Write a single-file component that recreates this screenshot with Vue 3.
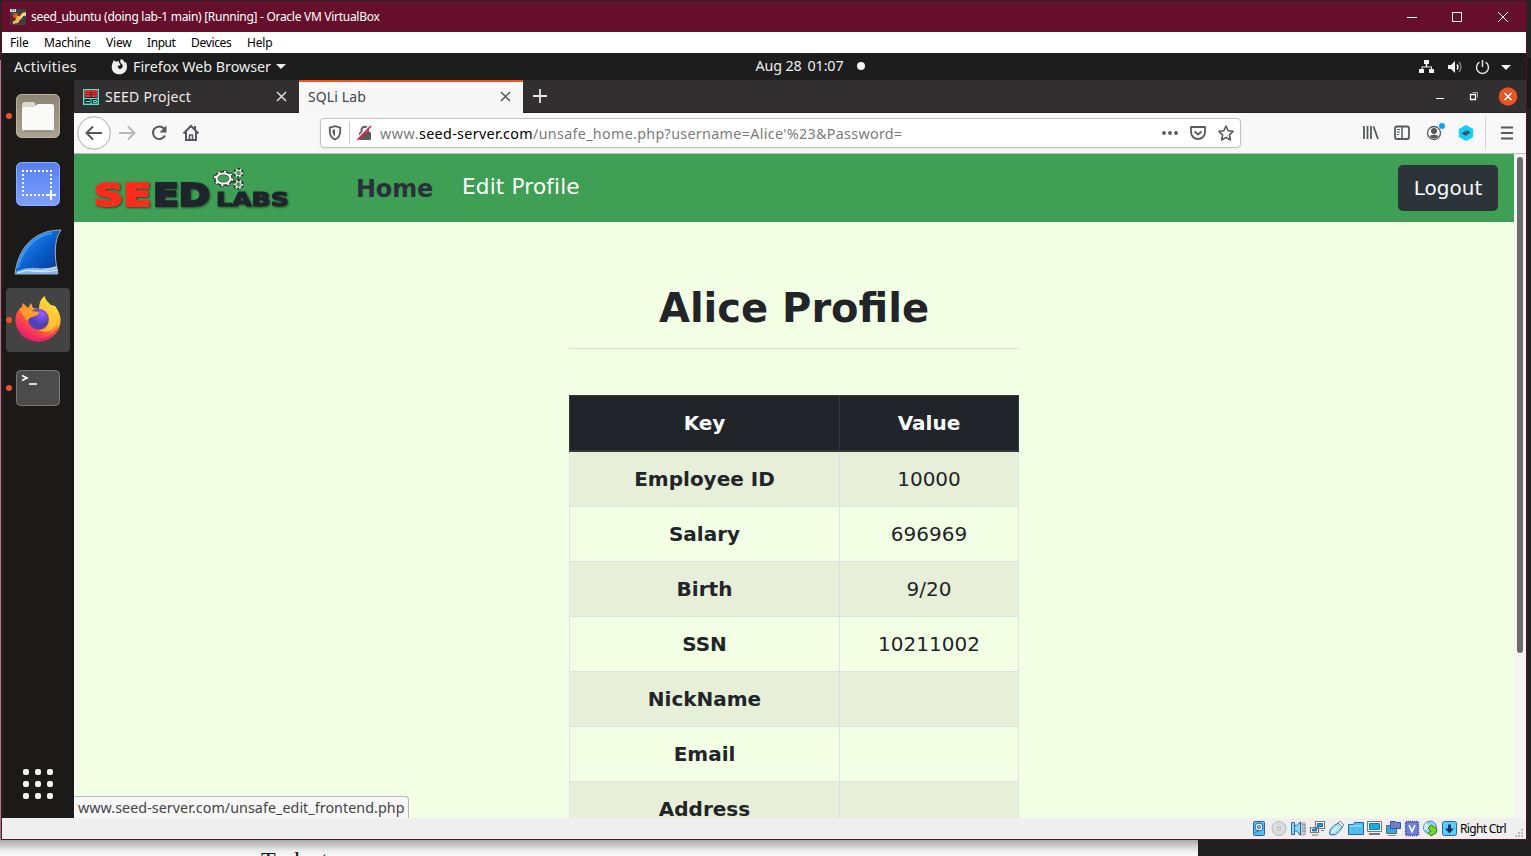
<script setup>
// Tracks each label out or in so it fills the given advance width.
const vFit = {
  mounted(el, { value }) {
    const width = el.getBoundingClientRect().width
    el.style.letterSpacing = `${(value - width) / el.textContent.length}px`
  }
}
const menus = [['File', 18.5], ['Machine', 46.5], ['View', 25.5], ['Input', 28.5], ['Devices', 40.5], ['Help', 25.5]]
const rows = [
  ['Employee ID', '10000'], ['Salary', '696969'], ['Birth', '9/20'], ['SSN', '10211002'],
  ['NickName', ''], ['Email', ''], ['Address', '']
]
</script>

<template>
  <div class="desktop">
    <div class="behind"><span class="paper"><span>Tasks t</span></span></div>
    <div class="vm">
      <header class="titlebar">
        <svg class="vmicon" width="16" height="16" viewBox="0 0 16 16">
          <rect width="16" height="16" fill="#3b414b" /><path d="M0 0h6v3H0z" fill="#ddd" /><path d="M1 1h4" stroke="#777" />
          <path d="M1 7l4 1-1 5-4-1z" fill="#6a2022" /><circle cx="5.5" cy="6.5" r="2.6" fill="#e64b26" />
          <path d="M7 7h3l2-3 4-1v4h-3l-3 4-2 3-5 1v-3h2z" fill="#f1b94c" /><path d="M8 8h3l2-3 3-1v1l-2 1-3 4z" fill="#fbe19a" />
        </svg>
        <span v-fit="348.5">seed_ubuntu (doing lab-1 main) [Running] - Oracle VM VirtualBox</span>
        <svg class="wincontrols" width="105" height="12" viewBox="0 0 105 12" fill="none" stroke="#fff">
          <path d="M0 6.5h10M45.5 1.5h9v9h-9zM91 1l10 10M101 1L91 11" />
        </svg>
      </header>
      <nav class="menubar"><span v-for="m in menus" :key="m[0]" v-fit="m[1]">{{ m[0] }}</span></nav>

      <div class="topbar">
        <div class="tb-left">
          <span v-fit="63">Activities</span>
          <svg class="fxsym" width="17" height="16" viewBox="0 0 17 16">
            <path fill="#f0f0f0" d="M2 3l1-2 1.3 1.4 2 .2L8 2v2l1.500 1-.6 1.400-2 .4C6.300 9.800 9 10.800 10.800 9.300c1.600-1.500 1-3.800-.8-5L9 2.500 10 0c2 .7 3 1.800 3.500 3.400L15 3c1.700 4 1.200 7.600-1 10-3 3-8 3-11 .4C.2 11 .2 6.500 2 3z" />
          </svg>
          <span v-fit="138">Firefox Web Browser</span>
          <i class="caret"></i>
        </div>
        <div class="clock"><span v-fit="46">Aug 28</span><span v-fit="36">01:07</span><i></i></div>
        <div class="tray">
          <svg width="92" height="16" viewBox="0 0 92 16">
            <path d="M5 1h5v4H8.300v2.500H13V10h2v4h-5v-4h2V8.500H3.500V10H5v4H0v-4h2.500V7.500h4.200V5H5z" fill="#f2f2f2" />
            <path d="M29 6h3l4-4v12l-4-4h-3z" fill="#f2f2f2" />
            <path d="M38 5.500q2 2.500 0 5" fill="none" stroke="#f2f2f2" stroke-width="1.500" /><path d="M40 3q4 5 0 10" fill="none" stroke="#888" stroke-width="1.300" />
            <path d="M60.500 3.200a6 6 0 1 0 6 0M63.500 1v7" fill="none" stroke="#e2e2e2" stroke-width="1.500" />
            <path d="M82 6h10l-5 5z" fill="#f2f2f2" />
          </svg>
        </div>
      </div>

      <div class="guest">
        <aside class="dock">
          <div class="slot run">
            <svg width="46" height="46" viewBox="0 0 46 46">
              <defs><linearGradient id="fl" x2="0" y2="1"><stop stop-color="#8d8674" /><stop offset="1" stop-color="#aaa28e" /></linearGradient></defs>
              <rect x="1.500" y="1.500" width="43" height="43" rx="5" fill="url(#fl)" stroke="#bab3a3" />
              <path d="M7 12q0-3 3-3h8q2 0 2.500 3h16q2 0 2 2v4H7z" fill="#ddd8cc" />
              <path d="M7 36V16q0-2 2-2h10l4-3h14q2 0 2 2v22q0 2.500-2 2.500H9q-2 0-2-1.500z" fill="#fafaf8" />
              <path d="M9 38h28" stroke="#7b7464" />
            </svg>
          </div>
          <div class="slot">
            <svg width="46" height="46" viewBox="0 0 46 46">
              <defs><linearGradient id="sb" x2="0" y2="1"><stop stop-color="#5680ef" /><stop offset="1" stop-color="#7ea1fc" /></linearGradient></defs>
              <rect x="1.500" y="1.500" width="43" height="43" rx="5" fill="url(#sb)" stroke="#91adfa" />
              <path d="M7 10h30M8 13v22M7 34h24M36 13v17" stroke="#fff" stroke-width="2" stroke-dasharray="2 2" fill="none" /><path d="M31 34h10M36 29v10" stroke="#fff" stroke-width="2" />
            </svg>
          </div>
          <div class="slot">
            <svg width="48" height="46" viewBox="0 0 48 46">
              <defs><linearGradient id="fin" x1="0" y1="0" x2="1" y2="1"><stop stop-color="#42a5ff" /><stop offset=".48" stop-color="#0c62d2" /><stop offset="1" stop-color="#01328d" /></linearGradient></defs>
              <path d="M1 45C4 20 19 1 47 1C40 10 40 28 44 45Z" fill="url(#fin)" stroke="#a2abb4" />
              <path d="M4 39C8 20 20 7 38 4" fill="none" stroke="#52adfa" stroke-width="2" opacity=".65" />
              <path d="M3 42q10-4 20-3t20-2l1 8H2z" fill="#86b3e6" /><path d="M3 44q10-4 18-2t23-1M12 41q14 3 31-3" fill="none" stroke="#e3effc" />
            </svg>
          </div>
          <div class="slot run active">
            <svg width="46" height="47" viewBox="0 0 46 47">
              <defs>
                <linearGradient id="fx" x1=".85" y1=".05" x2=".2" y2=".95"><stop stop-color="#fff44f" /><stop offset=".35" stop-color="#ffb52d" /><stop offset=".65" stop-color="#ff553c" /><stop offset="1" stop-color="#e5147d" /></linearGradient>
                <radialGradient id="fg" cx=".65" cy=".25"><stop stop-color="#9b5cff" /><stop offset="1" stop-color="#5140b5" /></radialGradient>
              </defs>
              <path d="M6 13l2-5 5 5 3-5 2 5 6 1C24 8 26 3 30 1c0 4 3 6 6 9l4 1c4 5 6 11 5.500 15C45 38 35 46.500 23 46.500S.5 37 .5 25c0-5 1.500-9 5.500-12z" fill="url(#fx)" />
              <path d="M2 32c4 10 15 13 25 11 8-1 14-7 17-12-3 10-11 15.500-21 15.500C13 46.500 4 41 2 32z" fill="#e51f70" opacity=".65" />
              <circle cx="23.500" cy="24" r="10.500" fill="url(#fg)" />
              <path d="M4 14c5-3 9-2 13 2l7 1c0 3-3 4-7 5-3 1-4 2-4 4-5-4-5-8-9-12z" fill="#ff9b27" />
              <path d="M24 14c6 0 10 4 10 11s-5 10-10 10c8 5 18-1 18-11 0-5-2-9-5-12l-6-7c-3 2-5 5-7 9z" fill="#ffcf38" opacity=".75" />
            </svg>
          </div>
          <div class="slot run">
            <svg width="46" height="38" viewBox="0 0 46 38">
              <rect x="1.500" y="1.500" width="43" height="35" rx="4" fill="#4b4b4b" stroke="#777" /><path d="M7 6.500l5 2.500-5 2.500" fill="none" stroke="#fff" stroke-width="1.600" /><path d="M14 15h8" stroke="#fff" stroke-width="1.600" />
            </svg>
          </div>
          <div class="apps"><i v-for="n in 9" :key="n"></i></div>
        </aside>

        <section class="browser">
          <div class="tabs">
            <div class="tab idle">
              <svg width="16" height="16" viewBox="0 0 16 16"><rect x=".7" y=".7" width="14.600" height="14.600" fill="#252a33" stroke="#51e4c8" stroke-width="1.400" /><path d="M1.500 2h6M1.500 4.500h6M1.500 7h6M8.500 2h6M8.500 4.500h6M8.500 7h6" stroke="#ee2d2b" stroke-width="1.900" /><path d="M1 9.500h14M8 9v6M3 12.500h4M10.500 11.500h3v2h-3z" stroke="#51e4c8" fill="none" /></svg>
              <span v-fit="86">SEED Project</span>
              <svg class="x" width="11" height="11" viewBox="0 0 11 11"><path d="M1 1l9 9M10 1L1 10" stroke="#dedede" stroke-width="1.500" /></svg>
            </div>
            <div class="tab current">
              <span v-fit="58">SQLi Lab</span>
              <svg class="x" width="11" height="11" viewBox="0 0 11 11"><path d="M1 1l9 9M10 1L1 10" stroke="#555" stroke-width="1.500" /></svg>
            </div>
            <svg class="plus" width="14" height="14" viewBox="0 0 14 14"><path d="M7 0v14M0 7h14" stroke="#e4e4e4" stroke-width="1.800" /></svg>
            <svg class="fxcontrols" width="82" height="20" viewBox="0 0 82 20" fill="none">
              <path d="M0 12.500h8" stroke="#fff" /><path d="M34.500 8.500h5v5h-5z" stroke="#fff" stroke-width="1.300" /><path d="M36.500 6.500h5v5" stroke="#aaa" />
              <circle cx="72" cy="10.500" r="9.300" fill="#e95420" /><path d="M68.500 7l7 7M75.500 7l-7 7" stroke="#fff" stroke-width="1.600" />
            </svg>
          </div>

          <div class="toolbar">
            <svg class="navbtns" width="126" height="34" viewBox="0 0 126 34" fill="none" stroke="#55585c" stroke-width="2">
              <circle cx="17" cy="17" r="16.300" fill="#fff" stroke="#aaa" stroke-width="1" />
              <path d="M25 17H10M16 10.500L9.500 17l6.500 6.500" />
              <path d="M42 17h15M51 10.500l6.500 6.500-6.500 6.500" stroke="#b7b8b9" />
              <path d="M87 12.500a6.300 6.300 0 1 0 1 7" /><path d="M89.500 9.500v7h-7z" fill="#55585c" stroke="none" />
              <path d="M106.500 17.500l7.500-7.500 7.500 7.500M109 16v8h10v-8M118 10v4" /><path d="M112.500 24v-5h3v5" stroke-width="1.500" />
            </svg>
            <div class="url">
              <svg width="14" height="16" viewBox="0 0 14 16"><path d="M7 1.200l5.200 1.500V6.500c0 4-2 6.500-5.200 8-3.200-1.500-5.200-4-5.200-8V2.700z" fill="none" stroke="#5b5b5b" stroke-width="1.800" /><path d="M7 4.200v7.300C5 10 4.500 8.500 4.500 5z" fill="#5b5b5b" /></svg>
              <i class="sep"></i>
              <svg class="lock" width="16" height="16" viewBox="0 0 16 16"><path d="M4.500 8V5a3.200 3.200 0 0 1 6.500 0v3" fill="none" stroke="#5b5b5b" stroke-width="2" /><rect x="2" y="7" width="12" height="8" rx="1.200" fill="#5b5b5b" /><path d="M0 13.500L13 0" stroke="#fff" stroke-width="1.500" /><path d="M.5 15L14 1" stroke="#ff1749" stroke-width="1.800" /></svg>
              <span class="addr"><span v-fit="39">www.</span><b v-fit="114">seed-server.com</b><span v-fit="369.500">/unsafe_home.php?username=Alice'%23&amp;Password=</span></span>
              <svg class="urlicons" width="72" height="18" viewBox="0 0 72 18" fill="none" stroke="#5b5b5b" stroke-width="1.800">
                <g fill="#5b5b5b" stroke="none"><circle cx="2" cy="9" r="1.900" /><circle cx="8" cy="9" r="1.900" /><circle cx="14" cy="9" r="1.900" /></g>
                <path d="M29 3h14v5c0 4-3 7-7 7s-7-3-7-7zM32.500 7.500l3.500 3 3.500-3" stroke-linejoin="round" />
                <path d="M64 2l2.100 4.700 5 .6-3.700 3.500 1 5.200-4.400-2.600-4.400 2.600 1-5.200-3.700-3.500 5-.6z" stroke-width="1.600" stroke-linejoin="round" />
              </svg>
            </div>
            <svg class="extras" width="152" height="34" viewBox="0 0 152 34" fill="none" stroke="#55585c" stroke-width="2">
              <path d="M2 10v13M5.500 10v13M9 10v13M11.500 10.500l4.500 12.500" stroke-width="1.800" />
              <rect x="33" y="10.500" width="14" height="12.500" rx="2" stroke-width="1.800" /><path d="M40 10v13" stroke-width="1.500" /><path d="M35 13.500h3M35 16h3M35 18.500h2" stroke-width="1" />
              <circle cx="72" cy="17" r="6.500" stroke-width="1.300" /><circle cx="72" cy="15" r="3" fill="#55585c" stroke="none" /><path d="M67.500 20q4.500-2.500 9 0-1.500 2.500-4.500 2.500T67.500 20z" fill="#55585c" stroke="none" /><circle cx="80" cy="10" r="3" fill="#0aa5f7" stroke="none" />
              <path d="M104 9l7.200 4v8l-7.200 4-7.200-4v-8z" fill="#14cff9" stroke="none" /><path d="M99.500 17.500l4-3v2h1v3.500zM108.500 16.500l-4-2.500v5z" fill="#3b4b55" stroke="none" />
              <path d="M123.500 0v34" stroke="#d5d5d6" stroke-width="1" /><path d="M139 11.500h12M139 17h12M139 22.500h12" stroke-width="1.800" />
            </svg>
          </div>

          <div class="viewport">
            <main class="page">
              <div class="sitebar">
                <svg class="logo" width="202" height="48" viewBox="0 0 202 48">
                  <g class="wordmark" stroke-linejoin="miter">
                    <text x="1" y="39.500" font-size="32" fill="#ff2b1d" stroke="#ff2b1d" stroke-width="2.200" textLength="57" lengthAdjust="spacingAndGlyphs">SE</text>
                    <text x="60" y="39.500" font-size="32" fill="#20242c" stroke="#20242c" stroke-width="2.200" textLength="57" lengthAdjust="spacingAndGlyphs">ED</text>
                    <text x="123" y="39.500" font-size="19.500" fill="#20242c" stroke="#20242c" stroke-width="1" textLength="73" lengthAdjust="spacingAndGlyphs">LABS</text>
                  </g>
                  <g fill="none" stroke="#26332b">
                    <ellipse cx="130.500" cy="12.500" rx="7.500" ry="5.500" stroke-width="4" /><ellipse cx="130.500" cy="12.500" rx="9" ry="6.800" stroke-width="3.500" stroke-dasharray="3.200 3" />
                    <g stroke-width="3.200"><circle cx="145.500" cy="7" r="3.700" stroke-dasharray="2.700 1.200" /><circle cx="145.500" cy="18.500" r="3.700" stroke-dasharray="2.700 1.200" /></g>
                  </g>
                  <g fill="none" stroke="#f6f6f6">
                    <ellipse cx="130.500" cy="12.500" rx="7" ry="5" stroke-width="2.200" /><ellipse cx="130.500" cy="12.500" rx="8.800" ry="6.800" stroke-width="2" stroke-dasharray="2.200 4" />
                    <g stroke-width="1.100"><circle cx="145.500" cy="7" r="2.700" /><circle cx="145.500" cy="18.500" r="2.700" /><g stroke-width="1.400" stroke-dasharray="1.400 2.600"><circle cx="145.500" cy="7" r="4" /><circle cx="145.500" cy="18.500" r="4" /></g></g>
                  </g>
                </svg>
                <b class="home"><span v-fit="77">Home</span></b>
                <span class="edit"><span v-fit="117.800">Edit Profile</span></span>
                <button class="logout">Logout</button>
              </div>
              <div class="profile">
                <h1>Alice Profile</h1>
                <div class="table">
                  <div class="row head"><b>Key</b><b>Value</b></div>
                  <div v-for="r in rows" :key="r[0]" class="row"><b>{{ r[0] }}</b><span>{{ r[1] }}</span></div>
                </div>
              </div>
            </main>
            <div class="scroll"><i></i></div>
            <div class="tip"><span v-fit="326.500">www.seed-server.com/unsafe_edit_frontend.php</span></div>
          </div>
        </section>
      </div>

      <footer class="status">
        <svg width="206" height="18" viewBox="0 0 206 18" fill="#a9e4ff" stroke="#2866b4">
          <rect x="1.500" y="2.500" width="11" height="14" rx="1" fill="#54bdf6" /><circle cx="7" cy="8" r="4" fill="#eafaff" /><circle cx="7" cy="8" r="1.500" /><path d="M3 14l4-3" fill="none" />
          <circle cx="27" cy="9.500" r="7" fill="#ddd" stroke="#b6b6b6" /><circle cx="27" cy="9.500" r="1.500" fill="#eee" stroke="#aaa" />
          <path d="M47 4h6v12h-6z" fill="#ccc" stroke="#aaa" /><path d="M50 6h4M50 9h4M50 12h4" stroke="#888" /><path d="M39.500 3.500h3v12h-3zM42.500 6.500h2l4-3.500v13l-4-4h-2z" fill="#8bd8fa" />
          <path d="M63.500 2.500h9v7h-9zM58.500 8.500h8v5h-8z" stroke="#777" fill="#fff" stroke-width="1.200" /><path d="M65.500 4.500h5v3h-5zM60.500 10h4v2h-4z" fill="#1c9ce0" stroke="#1769ad" /><path d="M60 16h6M69 11.500h3" stroke="#777" />
          <path d="M77.500 14q0-4 4-7l5-3 4 4-3 4q-4 5-8 4-2 0-2-2z" /><path d="M86 4l2-2 4 4-2 2z" fill="#eee" stroke="#888" /><path d="M80 14l6-6" stroke="#e4f7ff" stroke-width="1.500" />
          <path d="M96.500 5.500h5l1-2h9v12h-15z" fill="#52bced" /><path d="M98 7h12" stroke="#b6edff" />
          <path d="M115.500 2.500h14v10h-14z" fill="#f7f7f7" stroke="#777" /><path d="M117.500 4.500h10v6h-10z" fill="#1aaee9" stroke="#137eb8" /><path d="M117 15h11" stroke="#777" stroke-width="2" />
          <path d="M134.500 6.500h10v8h-10z" fill="#2ba8ea" stroke="#666" /><path d="M136 16.500h8" stroke="#888" /><path d="M138.500 2.500h5l1 1h4v6h-10z" fill="#6d7ed0" stroke="#424ea7" />
          <rect x="154" y="3" width="12" height="13" fill="#7284df" stroke="#464fae" stroke-width="2.500" stroke-dasharray="1 1" /><rect x="154" y="3" width="12" height="13" fill="#6f80dc" stroke="#4c58b4" /><path d="M157 6l3 6.500 3-6.500" fill="none" stroke="#fff" stroke-width="1.700" />
          <circle cx="178" cy="8.500" r="6.500" fill="#8fd3f2" stroke="#5a87a8" /><path d="M173 4l4 2-1 4-4 1" fill="#d7f3fb" stroke="none" /><path d="M179 6l6 4-1 4-5 3-3-3 3-2-3-3z" fill="#75d62b" stroke="#397b18" />
          <rect x="190.500" y="2.500" width="14" height="14" rx="2" fill="#59d0fa" /><path d="M196 5.500h3v4h3l-4.500 5-4.500-5h3z" fill="#153564" stroke="none" />
        </svg>
        <span v-fit="46">Right Ctrl</span>
        <svg class="grip" width="9" height="9" viewBox="0 0 9 9" fill="#bbb"><path d="M6 0h2v2H6zM3 3h2v2H3zM6 3h2v2H6zM0 6h2v2H0zM3 6h2v2H3zM6 6h2v2H6z" /></svg>
      </footer>
    </div>
  </div>
</template>

<style>
html, body { margin: 0; overflow: hidden; }
</style>
<style scoped>
* { box-sizing: border-box; }
span, b { white-space: pre; }
svg { flex: none; display: block; }
.desktop { width: 1531px; height: 856px; background: linear-gradient(#242424 0 58px, #181818 58px 108px, #202020 108px); position: relative; overflow: hidden; font-family: "Noto Sans", sans-serif; padding: 1px; }
.behind { position: absolute; inset: 0; background: linear-gradient(90deg, #8d8289 1px, transparent 1px) 0 60px no-repeat; }
.paper { position: absolute; left: 0; top: 840px; width: 1198px; height: 16px; overflow: hidden; background: linear-gradient(#aaa, #eee 11px, #fafafa); font: 24px/24px "Liberation Serif", serif; padding: 8px 0 0 261px; color: #111; }
.paper span { display: block; }
.vm { position: relative; width: 1526px; height: 839px; border: 1px solid #5d0e2b; border-top: 0; display: flex; flex-direction: column; background: #efefef; }
.titlebar { height: 31px; background: #660f2c; color: #fff; display: flex; align-items: center; padding-left: 8px; font-size: 12px; flex: none; }
.vmicon { margin-right: 5px; }
.wincontrols { margin-left: auto; margin-right: 14px; }
.menubar { height: 21px; flex: none; background: #fff; display: flex; align-items: center; font-size: 12px; color: #000; padding-left: 8px; gap: 15.500px; }
.topbar { height: 27px; flex: none; background: #1d1d1d; color: #eee; display: grid; grid-template-columns: 1fr auto 1fr; align-items: center; font-size: 14.300px; }
.tb-left { display: flex; align-items: center; padding-left: 12px; }
.fxsym { margin: 0 5px 0 34px; }
.caret { border: 5px solid transparent; border-top-color: #eee; border-bottom: 0; margin-left: 5px; }
.clock { display: flex; align-items: center; gap: 6px; transform: translate(46px, -1px); }
.clock i { width: 8px; height: 8px; border-radius: 50%; background: #f2f2f2; margin-left: 7px; }
.tray { display: flex; justify-content: flex-end; padding-right: 15px; }
.guest { height: 738px; flex: none; display: flex; }
.dock { width: 72px; background: #1b1a18; display: flex; flex-direction: column; padding: 4px 4px 0; gap: 4px; }
.slot { height: 64px; width: 64px; display: flex; align-items: center; justify-content: center; border-radius: 4px; position: relative; flex: none; }
.active { background: #434343; }
.active svg { margin-bottom: 3px; }
.run::before { content: ""; position: absolute; left: 0; top: 29px; width: 6px; height: 6px; border-radius: 50%; background: #e95420; }
.apps { margin: auto 0 19px 17px; display: grid; grid-template-columns: repeat(3, 6px); gap: 6px; }
.apps i { height: 6px; border-radius: 2px; background: #f2f2f2; }
.browser { width: 1452px; display: flex; flex-direction: column; font-size: 14px; }
.tabs { height: 33px; flex: none; background: #322f30; display: flex; align-items: center; border-bottom: 1px solid #262425; }
.tab { height: 33px; display: flex; align-items: center; width: 225px; }
.idle { color: #eee; padding-left: 9px; }
.idle span { margin-left: 6px; }
.idle svg { position: relative; top: 0.5px; }
.current { width: 224px; background: #f7f7f8; border-top: 2px solid #e95420; color: #444; padding-left: 9px; margin-bottom: -1px; }
.current > * { position: relative; top: -1px; }
.x { margin-left: auto; margin-right: 12px; }
.plus { margin-left: 10px; }
.fxcontrols { margin-left: auto; margin-right: 8px; }
.toolbar { height: 41px; flex: none; background: #f8f8f8; border-bottom: 1px solid #bdbdbd; display: flex; align-items: center; }
.navbtns { margin-left: 3px; }
.url { width: 921px; height: 30px; margin-left: 117px; background: #fff; border: 1px solid #c2c2c2; border-radius: 4px; display: flex; align-items: center; padding: 0 6px 0 7px; box-shadow: 0 1px 3px #0001; }
.sep { width: 1px; height: 22px; background: #ccc; margin: 0 7px; }
.addr { margin-left: 7px; color: #7b7b7b; display: flex; font-size: 14.300px; }
.addr b { font-weight: 400; color: #000; }
.urlicons { margin-left: auto; }
.extras { margin-left: auto; margin-right: 12px; }
.viewport { flex: 1; min-height: 0; display: flex; position: relative; font-family: "DejaVu Sans", sans-serif; }
.page { width: 1440px; overflow: hidden; background: #f3ffe5; color: #212529; font-size: 20px; }
.sitebar { height: 68px; background: #3fa055; display: flex; align-items: flex-start; }
.logo { margin: 12px 0 0 19px; }
.wordmark { font-family: "DejaVu Sans", sans-serif; font-weight: bold; filter: drop-shadow(1px 1px 1px #0008); }
.home { margin: 19px 0 0 61px; font-size: 24px; line-height: 32px; color: #29323b; }
.edit { margin: 16px 0 0 29px; font-size: 21.600px; line-height: 34px; color: #fff; }
.logout { margin: 11px 16px 0 auto; width: 100px; height: 46px; border: 0; border-radius: 5px; background: #2c343a; color: #f8f9fa; font: 20px "DejaVu Sans", sans-serif; padding: 0; }
.profile { width: 450px; margin: 0 auto; }
h1 { margin: 0 0 46px; padding-top: 62px; height: 127px; border-bottom: 1px solid #d5e0ca; text-align: center; font-size: 40px; line-height: 48px; }
.row { height: 55px; display: grid; grid-template-columns: 270px 180px; border-bottom: 1px solid #dee2e6; }
.row > * { display: flex; align-items: center; justify-content: center; border-left: 1px solid #dee2e6; }
.row > :last-child { border-right: 1px solid #dee2e6; }
.row:nth-child(even) { background: #e7efd9; }
.head { height: 57px; background: #212529; color: #fff; border: 1px solid #32383e; border-width: 1px 0 2px; }
.head > *, .head > :last-child { border-color: #32383e; }
.scroll { width: 12px; background: #f5f5f5; padding: 3px 3px 0; }
.scroll i { display: block; height: 496px; border-radius: 3px; background: #6b6b6b; }
.tip { position: absolute; left: 0; bottom: 0; width: 335px; height: 22px; background: #f7f7f7; border: 1px solid #bbb; border-width: 1px 1px 0 0; border-radius: 0 4px 0 0; color: #444; padding-left: 4px; font: 14.300px/21px "Noto Sans", sans-serif; }
.status { height: 20px; display: flex; align-items: center; padding-left: 1250px; font-size: 12px; color: #000; }
.status > span { margin-left: 2px; }
.grip { margin-left: auto; margin-right: 2px; align-self: flex-end; }
</style>
